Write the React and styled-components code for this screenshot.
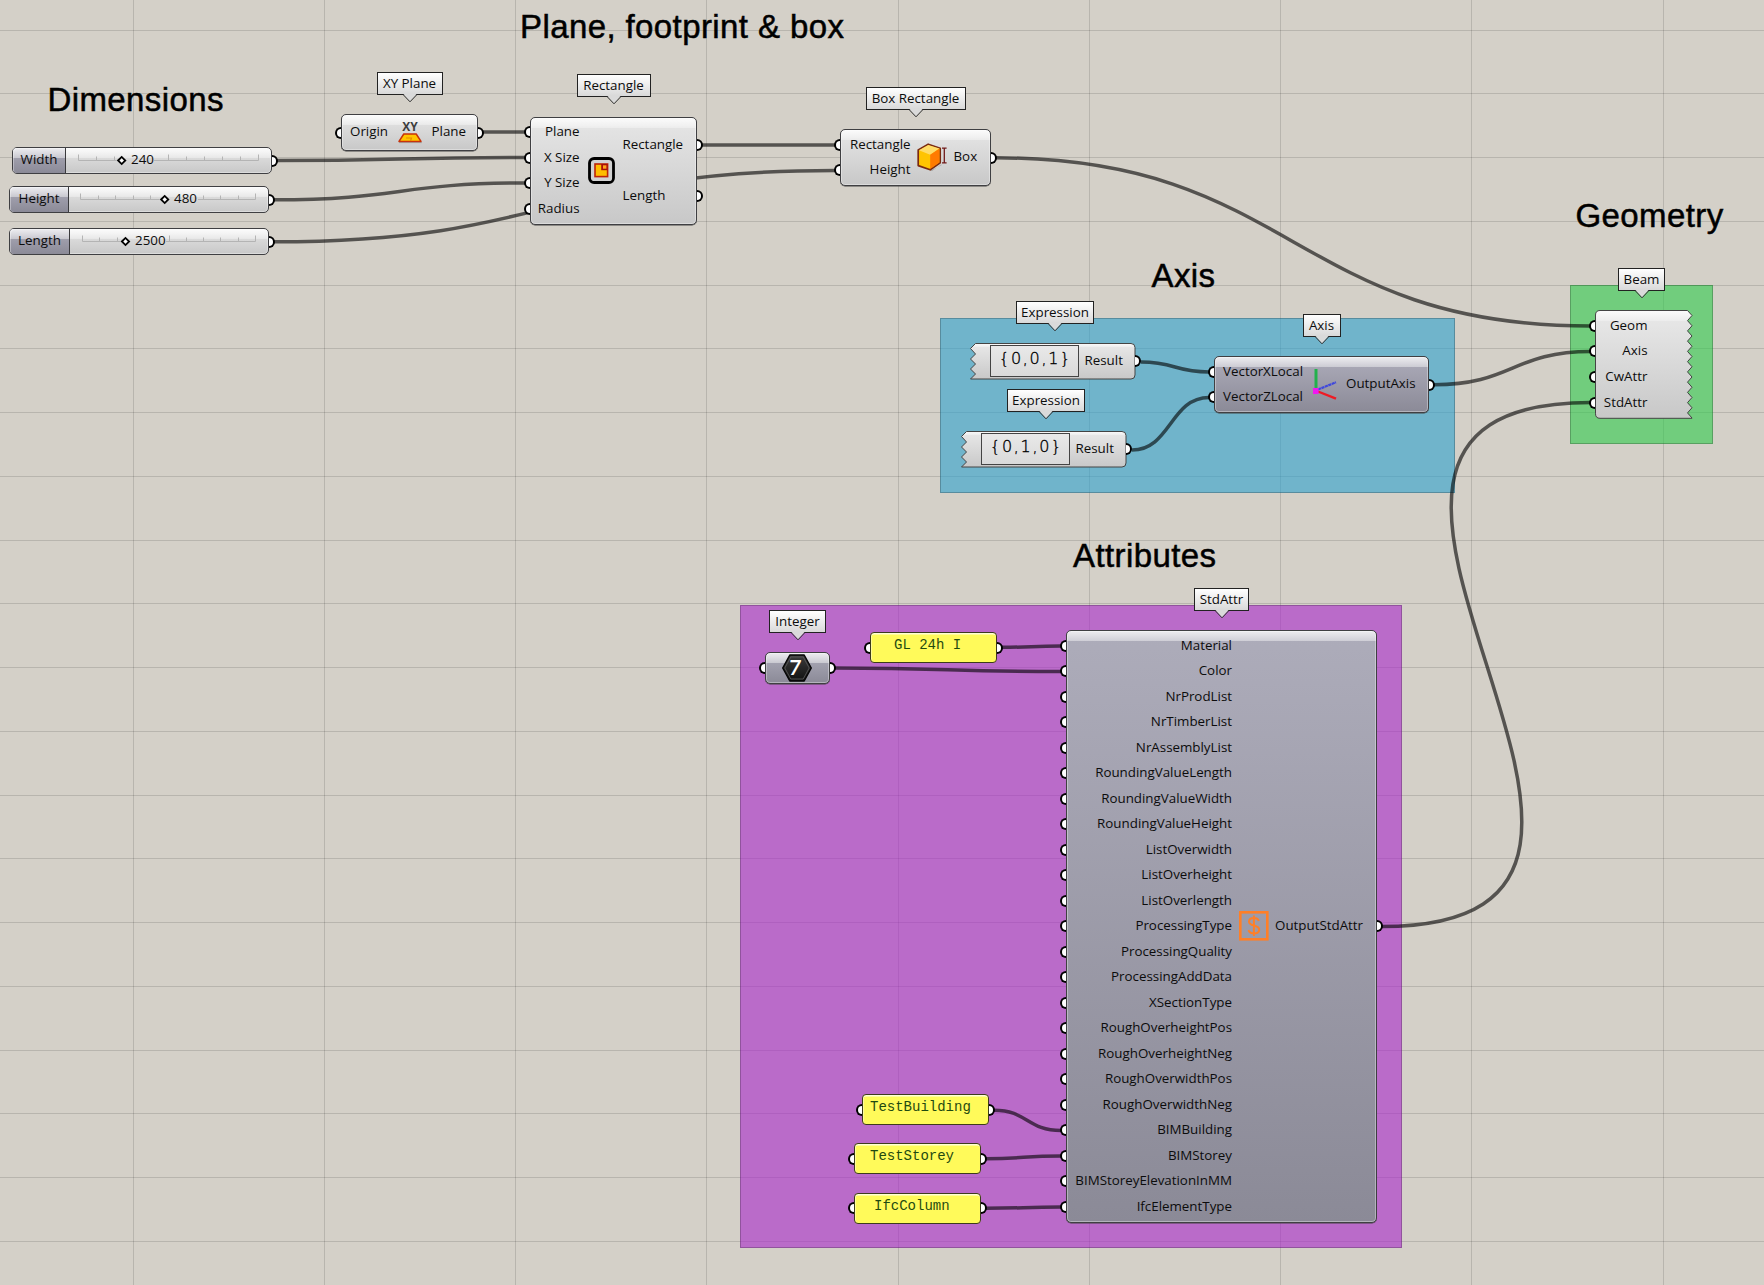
import React from "react";
import styled, { createGlobalStyle, css } from "styled-components";

const GlobalStyle = createGlobalStyle`
  * { box-sizing: border-box; }
  body { margin: 0; background: #d4d0c8; }
`;

const UI_FONT = '"Open Sans", "Noto Sans", sans-serif';

const Canvas = styled.main`
  position: relative;
  width: 1764px;
  height: 1285px;
  overflow: hidden;
  background: #d4d0c8;
  color: #0c0c0c;
  font: 13.35px/1 ${UI_FONT};
  white-space: nowrap;
`;

const Layer = styled.svg`
  position: absolute;
  inset: 0;
`;

const Group = styled.section`
  position: absolute;
  left: ${(p) => p.$x}px;
  top: ${(p) => p.$y}px;
  width: ${(p) => p.$w}px;
  height: ${(p) => p.$h}px;
  background: ${(p) => p.$color};
  border: 1px solid rgba(0, 0, 0, 0.22);
`;

const Heading = styled.h2`
  position: absolute;
  left: ${(p) => p.$x}px;
  top: ${(p) => p.$y}px;
  margin: 0;
  font: 400 33px/36px "Liberation Sans", Arial, sans-serif;
  letter-spacing: 0.4px;
  -webkit-text-stroke: 0.5px #000;
  color: #000;
`;

const NodeFrame = styled.div`
  position: absolute;
  left: ${(p) => p.$x}px;
  top: ${(p) => p.$y}px;
  display: flex;
  flex-direction: column;
  align-items: center;
`;

const Callout = styled.div`
  position: relative;
  left: ${(p) => p.$shift || 0}px;
  flex: none;
  width: ${(p) => p.$w}px;
  height: 23px;
  margin-bottom: ${(p) => p.$gap}px;
  display: flex;
  align-items: center;
  justify-content: center;
  border: 1px solid #222;
  background: linear-gradient(#ffffff, #d9d9d9);
`;

const Pointer = styled.svg`
  position: absolute;
  left: calc(50% - 7px);
  top: 21px;
`;

const lightFill = css`
  background:
    linear-gradient(rgba(255, 255, 255, 0.85), rgba(255, 255, 255, 0.35)) top / 100% 10px no-repeat,
    linear-gradient(#e6e6e6, #c8c8c8);
`;
const darkFill = css`
  background:
    linear-gradient(rgba(255, 255, 255, 0.78), rgba(255, 255, 255, 0.42)) top / 100% 10px no-repeat,
    linear-gradient(#adacba, #8b8a97);
`;

const Node = styled.article`
  position: relative;
  width: ${(p) => p.$w}px;
  height: ${(p) => p.$h}px;
  display: flex;
  align-items: stretch;
  padding: 2px 0;
  border: 1px solid #3f3f42;
  border-radius: 5px;
  box-shadow: inset 0 0 0 1px rgba(255, 255, 255, 0.35), 0 0.5px 0 #444;
  ${(p) => (p.$dark ? darkFill : lightFill)}
`;

const TornNode = styled.article`
  position: relative;
  width: ${(p) => p.$w}px;
  height: ${(p) => p.$h}px;
  display: flex;
  align-items: stretch;
  padding: ${(p) => p.$pad || "3px 0"};
`;

const TornShape = styled.svg`
  position: absolute;
  inset: 0;
  overflow: visible;
`;

const Column = styled.div`
  position: relative;
  display: flex;
  flex-direction: column;
  width: ${(p) => (p.$w ? `${p.$w}px` : "auto")};
  flex: ${(p) => (p.$w ? "none" : "1")};
`;

const Row = styled.div`
  position: relative;
  flex: 1;
  display: flex;
  align-items: center;
  justify-content: ${(p) => (p.$out ? "flex-start" : "flex-end")};
  padding-left: ${(p) => p.$gap || 0}px;
  padding-bottom: 1px;
`;

const Port = styled.i`
  position: absolute;
  top: calc(50% - 6px);
  width: 6px;
  height: 12px;
  background: #fff;
  border: 2.4px solid #000;
  ${(p) =>
    p.$side === "out"
      ? `right: ${p.$flush ? -6 : -7}px; border-left: none; border-radius: 0 6px 6px 0;`
      : `left: ${p.$flush ? -6 : -7}px; border-right: none; border-radius: 6px 0 0 6px;`}
`;

const Label = styled.span``;

const IconCell = styled.div`
  display: flex;
  align-items: center;
  justify-content: center;
  width: ${(p) => p.$w}px;
  padding-right: ${(p) => p.$nudge || 0}px;
  flex: none;
  & > svg { flex: none; overflow: visible; }
`;

const Slider = styled.div`
  position: absolute;
  left: ${(p) => p.$x}px;
  top: ${(p) => p.$y}px;
  width: ${(p) => p.$w}px;
  height: 27px;
  display: flex;
  border: 1px solid #3f3f42;
  border-radius: 5px;
  ${lightFill}
  box-shadow: inset 0 0 0 1px rgba(255, 255, 255, 0.35);
`;

const SliderName = styled.div`
  display: flex;
  align-items: center;
  justify-content: center;
  width: ${(p) => p.$w}px;
  padding-bottom: 1px;
  border-right: 1px solid #3a3a3d;
  border-radius: 4px 0 0 4px;
  box-shadow: inset 1px 1px 0 rgba(255, 255, 255, 0.35);
  ${darkFill}
`;

const SliderTrack = styled.div`
  position: relative;
  flex: 1;
  display: flex;
  align-items: center;
  padding-left: ${(p) => p.$indent}px;
  padding-bottom: 1px;
`;

const SliderScale = styled.svg`
  position: absolute;
  left: 0;
  top: 0;
  overflow: visible;
`;

const Panel = styled.div`
  position: absolute;
  left: ${(p) => p.$x}px;
  top: ${(p) => p.$y}px;
  width: 127px;
  height: 31px;
  padding: 4px 0 0 ${(p) => p.$indent}px;
  background: #fffa5a;
  border: 1px solid #3d3b1c;
  border-radius: 4px;
  box-shadow: inset 0 1.5px 0 rgba(255, 255, 255, 0.75), inset 1px 0 0 rgba(255, 255, 255, 0.4);
  color: #1f4a10;
  font: 14px/16px "Liberation Mono", monospace;
`;

const Formula = styled.div`
  position: relative;
  display: flex;
  align-items: center;
  justify-content: center;
  margin-left: 20px;
  width: 89px;
  height: 32px;
  padding: 0 0 5px 2px;
  border: 1px solid #444;
  background: linear-gradient(#e9e9e9, #dadada);
  color: #000;
  font: 200 16px/1 "DejaVu Sans", sans-serif;
  letter-spacing: 1.7px;
  -webkit-text-stroke: 0.35px #000;
`;

/* Icons */

const PlaneIcon = () => (
  <svg width="24" height="21" viewBox="0 0 24 21">
    <text x="12" y="8.8" textAnchor="middle" fontFamily="Open Sans, sans-serif" fontWeight="700" fontSize="12" fill="#3d3d3d">XY</text>
    <path d="M5.8 12h12.4l4.8 7.4H1z" fill="#ffc400" stroke="#c8320a" strokeWidth="1.5" strokeLinejoin="round" />
    <path d="M8 16h5.5l-1 3" fill="none" stroke="#e98a00" strokeWidth="1.2" />
    <path d="M1 20.6h23" stroke="#000" strokeOpacity=".18" />
  </svg>
);

const RectangleIcon = () => (
  <svg width="27" height="27" viewBox="0 0 27 27">
    <rect x="1.5" y="1.5" width="24" height="24" rx="4.6" fill="#d2d2d2" stroke="#000" strokeWidth="2.8" />
    <rect x="7" y="7" width="12.6" height="12.6" fill="#ffbd00" stroke="#bd2408" strokeWidth="1.6" />
    <path d="M13.2 7v6.2h6.4V7z" fill="#a90f08" />
    <rect x="15" y="8.3" width="3.4" height="3.4" fill="#ffa41c" />
  </svg>
);

const CubeIcon = () => (
  <svg width="30" height="29" viewBox="0 0 30 29">
    <path d="M13 27.8l11.5-5.5v-1L15 28z" fill="#000" fillOpacity=".2" />
    <path d="M1.2 7L11.2 1.2 23.2 5.2V19.8L13.2 26.8 1.2 22.6z" fill="#ffc400" stroke="#7a2a10" strokeWidth="1.7" strokeLinejoin="round" />
    <path d="M1.9 7.2L11.2 1.9 22.5 5.6 13.2 11.8z" fill="#ffdc66" />
    <path d="M13.2 11.8L22.5 5.6V19.5L13.2 26z" fill="#ff7b00" />
    <path d="M25 5.2h4.6M25 19.8h4.6M27.3 5.2v14.6" stroke="#701a1a" strokeWidth="1.3" fill="none" />
  </svg>
);

const AxesIcon = () => (
  <svg width="24" height="31" viewBox="0 0 24 31">
    <path d="M3 0v20" stroke="#22b14c" strokeWidth="3" />
    <path d="M5 20.5L23 13.3" stroke="#3f48dc" strokeWidth="2.2" strokeDasharray="3.2 .5" />
    <path d="M5 22.5L23 29.6" stroke="#ee1c24" strokeWidth="2.4" />
    <rect x="0" y="19" width="5.6" height="6" fill="#f018f0" />
  </svg>
);

const BeamIcon = () => (
  <svg width="30" height="23" viewBox="0 0 30 23">
    <path d="M1 3.5L4.6 1 29 14.6v5.6l-3.6 2.2L1 8.5z" fill="#e0a84e" stroke="#b98232" strokeWidth=".6" />
    <path d="M1 3.5L4.6 1 29 14.6l-3.8 2z" fill="#eebd6a" />
    <path d="M25.2 16.6l3.8-2v5.6l-3.6 2.2z" fill="#b06a22" />
  </svg>
);

const DollarIcon = () => (
  <svg width="30" height="30" viewBox="0 0 30 30">
    <rect x="1.3" y="1.3" width="27" height="27" fill="none" stroke="#ff7f27" strokeWidth="2.6" />
    <path d="M20 9.8C19 7.6 17 7 14.8 7c-3 0-4.8 1.600-4.800 3.700 0 5 10.200 2.600 10.200 7.800 0 2.500-2.200 4-5.200 4-2.700 0-4.700-1-5.500-3.300M14.900 4.500v20.500" fill="none" stroke="#ff7f27" strokeWidth="2" />
  </svg>
);

const IntegerIcon = () => (
  <svg width="30" height="28" viewBox="0 0 30 28">
    <defs>
      <linearGradient id="hex" x1="0" y1="0" x2="0" y2="1">
        <stop offset="0" stopColor="#3c3c3c" />
        <stop offset="1" stopColor="#111" />
      </linearGradient>
    </defs>
    <path d="M7.800 1h14.400L29.300 14l-7.100 13H7.800L.7 14z" fill="url(#hex)" stroke="#050505" strokeWidth="1.400" strokeLinejoin="round" />
    <path d="M8.800 3h12.400l6 11-6 11H8.800l-6-11z" fill="none" stroke="#5d5d5d" strokeWidth=".8" />
    <text x="13" y="21.400" textAnchor="middle" fontFamily="Open Sans, sans-serif" fontWeight="600" fontSize="21" fill="#fff" transform="skewX(-6) translate(1.500 0)">7</text>
  </svg>
);

/* Building blocks */

const columns = Array.from({ length: 9 }, (_, i) => Math.floor(132.75 + i * 191.25 + 0.49));
const rows = Array.from({ length: 20 }, (_, i) => Math.round(29.5 + i * 63.75));

const Grid = () => (
  <Layer width="1764" height="1285" stroke="#000" strokeOpacity=".13" shapeRendering="crispEdges">
    {columns.map((x) => <path key={x} d={`M${x + 0.5} 0V1285`} />)}
    {rows.map((y) => <path key={y} d={`M0 ${y + 0.5}H1764`} />)}
  </Layer>
);

const wires = [
  [276, 160.5, 525, 157.5],
  [274, 199.8, 525, 183],
  [274, 241.8, 835, 170.5],
  [482, 132, 525, 132],
  [702, 145, 836, 145],
  [996, 157.8, 1591, 326],
  [1141, 362, 1209, 372],
  [1132, 450, 1209, 397.5],
  [1434, 384.7, 1591, 351.5],
  [1002, 647.3, 1061, 646],
  [835, 668, 1061, 671.5],
  [994, 1110.3, 1061, 1130.5],
  [986, 1158.7, 1061, 1156],
  [986, 1208.3, 1061, 1207],
  [1382, 926.5, 1591, 402.5, 375],
];

const Wires = () => (
  <Layer width="1764" height="1285" fill="none" stroke="#000" strokeOpacity=".6" strokeWidth="3.5">
    {wires.map(([x1, y1, x2, y2, reach = (x2 - x1) / 2]) => (
      <path key={`${x1}-${y1}`} d={`M${x1} ${y1}C${x1 + reach} ${y1} ${x2 - reach} ${y2} ${x2} ${y2}`} />
    ))}
  </Layer>
);

const Tag = ({ w, gap, shift, children }) => (
  <Callout $w={w} $gap={gap} $shift={shift}>
    {children}
    <Pointer width="14" height="10" viewBox="0 0 14 10">
      <path d="M0.500 0L7 7.500 13.500 0z" fill="#dadada" />
      <path d="M0.500 1L7 7.800 13.500 1" fill="none" stroke="#2c2c2c" />
    </Pointer>
  </Callout>
);

const Inputs = ({ w, items, flush }) => (
  <Column $w={w}>
    {items.map((name) => (
      <Row key={name}>
        <Port $flush={flush} />
        <Label>{name}</Label>
      </Row>
    ))}
  </Column>
);

const Outputs = ({ gap, items, flush }) => (
  <Column>
    {items.map((name) => (
      <Row key={name} $out $gap={gap}>
        <Label>{name}</Label>
        <Port $side="out" $flush={flush} />
      </Row>
    ))}
  </Column>
);

const NumberSlider = ({ x, y, w, name, nameW, value, from, to, knob, valueX, valueEnd }) => {
  const at = (v) => v - x - nameW - 1;
  const step = (to - from) / 10;
  const ticks = Array.from({ length: 11 }, (_, i) => from + i * step);
  const visible = (v) => v < knob - 4 || v > valueEnd + 1;
  return (
    <Slider $x={x} $y={y} $w={w}>
      <SliderName $w={nameW}>{name}</SliderName>
      <SliderTrack $indent={at(valueX)}>
        <SliderScale width="200" height="25">
          <g stroke="#b4b4b4" fill="none">
            <path d={`M${at(from)} 12.500H${at(knob - 5)}M${at(valueEnd + 1)} 12.500H${at(to)}`} />
            {ticks.map((v, i) => visible(v) && (
              <path key={v} d={`M${Math.floor(at(v)) + 0.5} 12.500v${i % 5 === 0 ? -6 : -4}`} />
            ))}
          </g>
          <path d={`M${at(knob) - 3.600} 12.500l3.600-3.600 3.600 3.600-3.600 3.600z`} fill="#fff" stroke="#000" strokeWidth="1.800" />
        </SliderScale>
        <Label>{value}</Label>
      </SliderTrack>
      <Port $side="out" />
    </Slider>
  );
};

const TextPanel = ({ x, y, indent, children }) => (
  <Panel $x={x} $y={y} $indent={indent}>
    <Port />
    {children}
    <Port $side="out" />
  </Panel>
);

const Gradient = ({ id }) => (
  <defs>
    <linearGradient id={id} x1="0" y1="0" x2="0" y2="1">
      <stop offset="0" stopColor="#fbfbfb" />
      <stop offset="0.1" stopColor="#ececec" />
      <stop offset="0.1" stopColor="#e6e6e6" />
      <stop offset="1" stopColor="#c8c8c8" />
    </linearGradient>
  </defs>
);

const Expression = ({ id, children }) => (
  <TornNode $w={165} $h={36} $pad="2px 0">
    <TornShape width="165" height="36">
      <Gradient id={id} />
      <path
        d="M5.500 .5H161q4 0 4 4V32q0 4-4 4H.5L5.500 31 .5 26 5.500 21 .5 16 5.500 11 .5 5.500z"
        fill={`url(#${id})`}
        stroke="#444"
      />
    </TornShape>
    <Formula>{children}</Formula>
    <Outputs gap={5.5} items={["Result"]} flush />
  </TornNode>
);

const BEAM_EDGE = Array.from({ length: 21 }, (_, i) => `L${i % 2 ? 92.500 : 97} ${5.500 + i * 5.125}`).join("");

const stdAttributes = [
  "Material", "Color", "NrProdList", "NrTimberList", "NrAssemblyList",
  "RoundingValueLength", "RoundingValueWidth", "RoundingValueHeight",
  "ListOverwidth", "ListOverheight", "ListOverlength",
  "ProcessingType", "ProcessingQuality", "ProcessingAddData", "XSectionType",
  "RoughOverheightPos", "RoughOverheightNeg", "RoughOverwidthPos", "RoughOverwidthNeg",
  "BIMBuilding", "BIMStorey", "BIMStoreyElevationInMM", "IfcElementType",
];

export default function App() {
  return (
    <Canvas>
      <GlobalStyle />
      <Grid />
      <Group $x={940} $y={318} $w={515} $h={175} $color="rgba(45, 161, 205, 0.6)" />
      <Group $x={1570} $y={285} $w={143} $h={159} $color="rgba(47, 203, 75, 0.6)" />
      <Group $x={740} $y={605} $w={662} $h={643} $color="rgba(169, 40, 202, 0.6)" />
      <Wires />

      <Heading $x={47.5} $y={82}>Dimensions</Heading>
      <Heading $x={520} $y={9}>Plane, footprint &amp; box</Heading>
      <Heading $x={1151.5} $y={258}>Axis</Heading>
      <Heading $x={1575.500} $y={198}>Geometry</Heading>
      <Heading $x={1073} $y={538}>Attributes</Heading>

      <NumberSlider x={12} y={147} w={260} name="Width" nameW={53} value="240" from={78.5} to={258.5} knob={121.7} valueX={131} valueEnd={153} />
      <NumberSlider x={9} y={186} w={260} name="Height" nameW={59} value="480" from={80.5} to={255.5} knob={164.7} valueX={174} valueEnd={197} />
      <NumberSlider x={9} y={228} w={260} name="Length" nameW={60} value="2500" from={82.5} to={255.5} knob={125.5} valueX={135} valueEnd={165} />

      <NodeFrame $x={341} $y={72}>
        <Tag w={66} gap={19}>XY Plane</Tag>
        <Node $w={137} $h={37}>
          <Inputs w={46} items={["Origin"]} />
          <IconCell $w={43.5}><PlaneIcon /></IconCell>
          <Outputs gap={0} items={["Plane"]} />
        </Node>
      </NodeFrame>

      <NodeFrame $x={530} $y={74}>
        <Tag w={74} gap={19.500}>Rectangle</Tag>
        <Node $w={167} $h={108}>
          <Inputs w={48.5} items={["Plane", "X Size", "Y Size", "Radius"]} />
          <IconCell $w={43}><RectangleIcon /></IconCell>
          <Outputs gap={0} items={["Rectangle", "Length"]} />
        </Node>
      </NodeFrame>

      <NodeFrame $x={840} $y={87}>
        <Tag w={100} gap={19}>Box Rectangle</Tag>
        <Node $w={151} $h={57}>
          <Inputs w={69.5} items={["Rectangle", "Height"]} />
          <IconCell $w={42}><CubeIcon /></IconCell>
          <Outputs gap={1} items={["Box"]} />
        </Node>
      </NodeFrame>

      <NodeFrame $x={970} $y={301}>
        <Tag w={78} gap={19} shift={2.5}>Expression</Tag>
        <Expression id="expr-a">{"{0,0,1}"}</Expression>
      </NodeFrame>

      <NodeFrame $x={961} $y={389}>
        <Tag w={78} gap={19} shift={2.5}>Expression</Tag>
        <Expression id="expr-b">{"{0,1,0}"}</Expression>
      </NodeFrame>

      <NodeFrame $x={1214} $y={314}>
        <Tag w={38} gap={19}>Axis</Tag>
        <Node $dark $w={215} $h={57}>
          <Inputs w={88} items={["VectorXLocal", "VectorZLocal"]} />
          <IconCell $w={43} $nudge={-1}><AxesIcon /></IconCell>
          <Outputs gap={0} items={["OutputAxis"]} />
        </Node>
      </NodeFrame>

      <NodeFrame $x={1595} $y={268}>
        <Tag w={47} gap={19} shift={-2.5}>Beam</Tag>
        <TornNode $w={98} $h={108.5}>
          <TornShape width="98" height="109">
            <Gradient id="beam" />
            <path d={`M5 .5H92.500${BEAM_EDGE}L97 108.300H5q-4.500 0-4.500-4.500V5Q.5 .5 5 .5z`} fill="url(#beam)" stroke="#444" />
          </TornShape>
          <Inputs w={52.5} items={["Geom", "Axis", "CwAttr", "StdAttr"]} flush />
          <IconCell $w={43}><BeamIcon /></IconCell>
        </TornNode>
      </NodeFrame>

      <NodeFrame $x={765} $y={610}>
        <Tag w={57} gap={19}>Integer</Tag>
        <Node $dark $w={65} $h={32}>
          <Port />
          <IconCell $w={63} $nudge={1}><IntegerIcon /></IconCell>
          <Port $side="out" />
        </Node>
      </NodeFrame>

      <TextPanel x={870} y={632} indent={23}>GL 24h I</TextPanel>
      <TextPanel x={862} y={1094} indent={7}>TestBuilding</TextPanel>
      <TextPanel x={854} y={1143} indent={15}>TestStorey</TextPanel>
      <TextPanel x={854} y={1192.500} indent={19}>IfcColumn</TextPanel>

      <NodeFrame $x={1066} $y={588}>
        <Tag w={55} gap={19}>StdAttr</Tag>
        <Node $dark $w={311} $h={592.5}>
          <Inputs w={165} items={stdAttributes} />
          <IconCell $w={43}><DollarIcon /></IconCell>
          <Outputs gap={0} items={["OutputStdAttr"]} />
        </Node>
      </NodeFrame>
    </Canvas>
  );
}
